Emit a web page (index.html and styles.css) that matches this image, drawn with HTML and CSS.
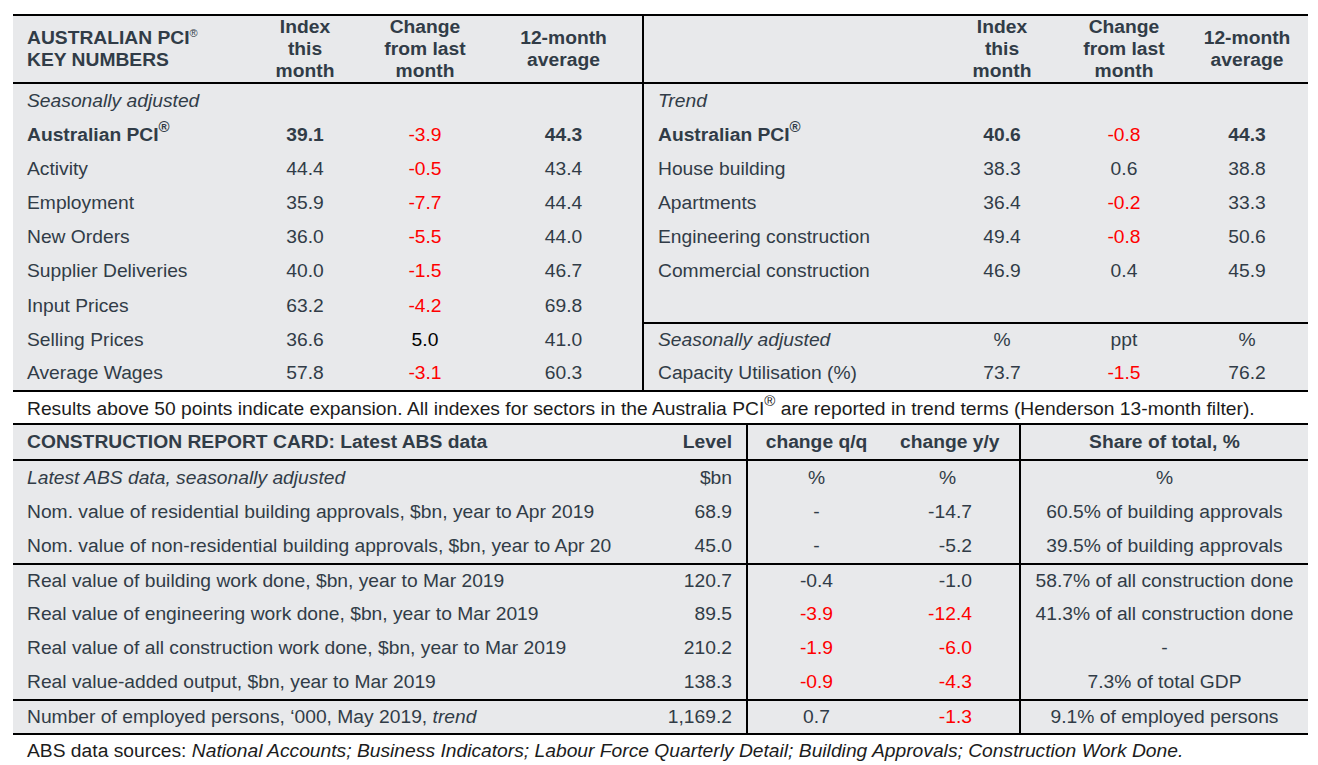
FILE: index.html
```html
<!DOCTYPE html>
<html>
<head>
<meta charset="utf-8">
<link rel="stylesheet" href="styles.css">
</head>
<body>
<div class="page">
  <table class="pci">
    <colgroup>
      <col class="c-label"><col class="c-num"><col class="c-num"><col class="c-avg">
      <col class="c-rlabel"><col class="c-num"><col class="c-rchg"><col class="c-ravg">
    </colgroup>
    <thead>
      <tr class="head">
        <th class="lbl">AUSTRALIAN PCI<sup class="reg-s">®</sup><br>KEY NUMBERS</th>
        <th>Index<br>this<br>month</th>
        <th>Change<br>from last<br>month</th>
        <th class="div">12-month<br>average</th>
        <th class="lbl"></th>
        <th>Index<br>this<br>month</th>
        <th>Change<br>from last<br>month</th>
        <th>12-month<br>average</th>
      </tr>
    </thead>
    <tbody>
      <tr>
        <td class="lbl it">Seasonally adjusted</td><td></td><td></td><td class="div"></td>
        <td class="lbl it">Trend</td><td></td><td></td><td></td>
      </tr>
      <tr class="bold">
        <td class="lbl">Australian PCI<sup class="reg">®</sup></td><td>39.1</td><td class="neg nb">-3.9</td><td class="div">44.3</td>
        <td class="lbl">Australian PCI<sup class="reg">®</sup></td><td>40.6</td><td class="neg nb">-0.8</td><td>44.3</td>
      </tr>
      <tr>
        <td class="lbl">Activity</td><td>44.4</td><td class="neg">-0.5</td><td class="div">43.4</td>
        <td class="lbl">House building</td><td>38.3</td><td>0.6</td><td>38.8</td>
      </tr>
      <tr>
        <td class="lbl">Employment</td><td>35.9</td><td class="neg">-7.7</td><td class="div">44.4</td>
        <td class="lbl">Apartments</td><td>36.4</td><td class="neg">-0.2</td><td>33.3</td>
      </tr>
      <tr>
        <td class="lbl">New Orders</td><td>36.0</td><td class="neg">-5.5</td><td class="div">44.0</td>
        <td class="lbl">Engineering construction</td><td>49.4</td><td class="neg">-0.8</td><td>50.6</td>
      </tr>
      <tr>
        <td class="lbl">Supplier Deliveries</td><td>40.0</td><td class="neg">-1.5</td><td class="div">46.7</td>
        <td class="lbl">Commercial construction</td><td>46.9</td><td>0.4</td><td>45.9</td>
      </tr>
      <tr>
        <td class="lbl">Input Prices</td><td>63.2</td><td class="neg">-4.2</td><td class="div">69.8</td>
        <td class="lbl"></td><td></td><td></td><td></td>
      </tr>
      <tr class="split">
        <td class="lbl">Selling Prices</td><td>36.6</td><td class="pos">5.0</td><td class="div">41.0</td>
        <td class="lbl it rt">Seasonally adjusted</td><td class="rt">%</td><td class="rt">ppt</td><td class="rt">%</td>
      </tr>
      <tr>
        <td class="lbl">Average Wages</td><td>57.8</td><td class="neg">-3.1</td><td class="div">60.3</td>
        <td class="lbl">Capacity Utilisation (%)</td><td>73.7</td><td class="neg">-1.5</td><td>76.2</td>
      </tr>
    </tbody>
  </table>

  <p class="note">Results above 50 points indicate expansion. All indexes for sectors in the Australia PCI<sup class="reg">®</sup> are reported in trend terms (Henderson 13-month filter).</p>

  <table class="card">
    <colgroup>
      <col class="k-label"><col class="k-level"><col class="k-qq"><col class="k-yy"><col class="k-share">
    </colgroup>
    <thead>
      <tr class="head">
        <th class="lbl">CONSTRUCTION REPORT CARD: Latest ABS data</th>
        <th class="lvl">Level</th>
        <th class="qq">change q/q</th>
        <th class="yyh">change y/y</th>
        <th class="share">Share of total, %</th>
      </tr>
    </thead>
    <tbody>
      <tr>
        <td class="lbl it">Latest ABS data, seasonally adjusted</td>
        <td class="lvl">$bn</td><td class="qq">%</td><td class="yyc">%</td><td class="share">%</td>
      </tr>
      <tr>
        <td class="lbl">Nom. value of residential building approvals, $bn, year to Apr 2019</td>
        <td class="lvl">68.9</td><td class="qq">-</td><td class="yy">-14.7</td><td class="share">60.5% of building approvals</td>
      </tr>
      <tr>
        <td class="lbl">Nom. value of non-residential building approvals, $bn, year to Apr 20</td>
        <td class="lvl">45.0</td><td class="qq">-</td><td class="yy">-5.2</td><td class="share">39.5% of building approvals</td>
      </tr>
      <tr class="sep">
        <td class="lbl">Real value of building work done, $bn, year to Mar 2019</td>
        <td class="lvl">120.7</td><td class="qq">-0.4</td><td class="yy">-1.0</td><td class="share">58.7% of all construction done</td>
      </tr>
      <tr>
        <td class="lbl">Real value of engineering work done, $bn, year to Mar 2019</td>
        <td class="lvl">89.5</td><td class="qq neg">-3.9</td><td class="yy neg">-12.4</td><td class="share">41.3% of all construction done</td>
      </tr>
      <tr>
        <td class="lbl">Real value of all construction work done, $bn, year to Mar 2019</td>
        <td class="lvl">210.2</td><td class="qq neg">-1.9</td><td class="yy neg">-6.0</td><td class="share">-</td>
      </tr>
      <tr>
        <td class="lbl">Real value-added output, $bn, year to Mar 2019</td>
        <td class="lvl">138.3</td><td class="qq neg">-0.9</td><td class="yy neg">-4.3</td><td class="share">7.3% of total GDP</td>
      </tr>
      <tr class="sep">
        <td class="lbl">Number of employed persons, ‘000, May 2019, <i>trend</i></td>
        <td class="lvl">1,169.2</td><td class="qq">0.7</td><td class="yy neg">-1.3</td><td class="share">9.1% of employed persons</td>
      </tr>
    </tbody>
  </table>

  <p class="sources">ABS data sources: <i>National Accounts; Business Indicators; Labour Force Quarterly Detail; Building Approvals; Construction Work Done.</i></p>
</div>
</body>
</html>
```

FILE: styles.css
```css
html, body {
  margin: 0;
  padding: 0;
  background: #ffffff;
}

body {
  font-family: "Liberation Sans", Arial, sans-serif;
  font-size: 19.25px;
  color: #313c47;
}

.page {
  padding: 14px 10px 0 13px;
  width: 1295px;
}

table {
  width: 1295px;
  table-layout: fixed;
  border-collapse: collapse;
  background: #e8e9eb;
}

th, td {
  padding: 0;
  text-align: center;
  vertical-align: middle;
  white-space: nowrap;
  overflow: hidden;
}

th {
  font-weight: bold;
}

/* ---------- PCI key numbers ---------- */
.pci {
  border-top: 2px solid #000;
  border-bottom: 2px solid #000;
}

.c-label { width: 232px; }
.c-num { width: 120px; }
.c-avg { width: 158px; }
.c-rlabel { width: 299px; }
.c-rchg { width: 124px; }
.c-ravg { width: 122px; }

.pci .head th {
  height: 65px;
  line-height: 22px;
  border-bottom: 2px solid #000;
}

.pci tbody td {
  height: 34px;
  line-height: 22px;
}

.pci tbody .split td {
  height: 32px;
}

.lbl {
  text-align: left;
  padding-left: 14px;
}

.div {
  border-right: 2px solid #000;
}

.rt {
  border-top: 2px solid #000;
}

.it {
  font-style: italic;
}

.bold td {
  font-weight: bold;
}

.bold td.nb {
  font-weight: normal;
}

.neg {
  color: #ff0000;
}

.pos {
  color: #000000;
}

.reg-s {
  font-size: 11px;
  font-weight: normal;
  vertical-align: 7px;
  line-height: 0;
}

.reg {
  font-size: 15px;
  vertical-align: 9px;
  line-height: 0;
}

/* ---------- notes ---------- */
.note, .sources {
  margin: 0;
  padding-left: 14px;
  color: #1c1c1c;
  white-space: nowrap;
}

.note {
  height: 31px;
  line-height: 34px;
}

.sources {
  height: 30px;
  line-height: 32px;
}

/* ---------- construction report card ---------- */
.card {
  border-top: 2px solid #000;
  border-bottom: 2px solid #000;
}

.k-label { width: 647px; }
.k-level { width: 87px; }
.k-qq { width: 138px; }
.k-yy { width: 135px; }
.k-share { width: 288px; }

.card .head th {
  height: 34px;
  line-height: 22px;
  border-bottom: 2px solid #000;
}

.card .head th.lbl {
  text-align: left;
}

.card tbody td {
  height: 34px;
  line-height: 22px;
}

.card tbody .sep td {
  height: 32px;
  border-top: 2px solid #000;
}

.card .lvl {
  text-align: right;
  padding-right: 14px;
}

.card .qq {
  border-left: 2px solid #000;
  text-align: center;
}

.card .yy {
  text-align: right;
  padding-right: 47px;
}

.card .yyc {
  text-align: right;
  padding-right: 63px;
}

.card .yyh {
  text-align: left;
  padding-left: 15px;
}

.card .share {
  border-left: 2px solid #000;
  text-align: center;
}
```
